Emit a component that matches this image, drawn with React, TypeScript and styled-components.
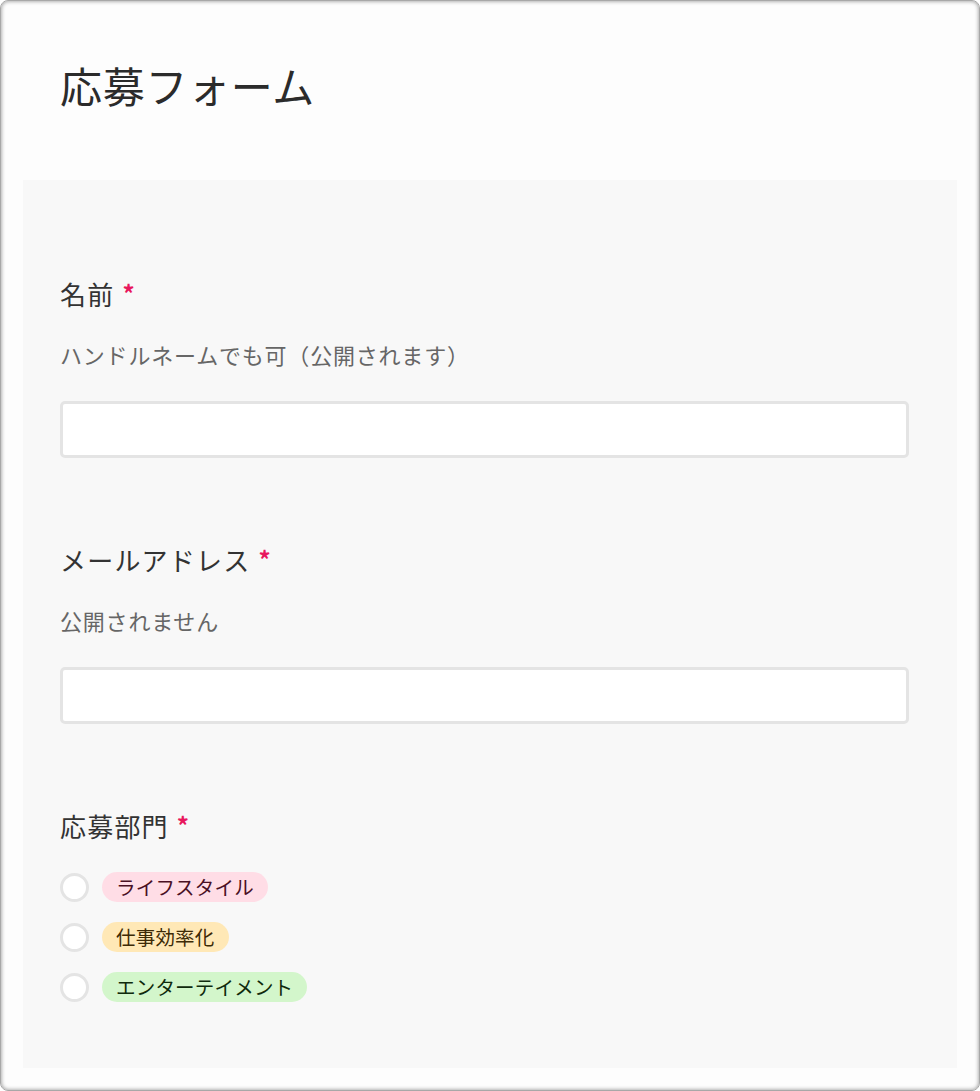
import React from 'react';
import styled, { createGlobalStyle } from 'styled-components';

const GlobalStyle = createGlobalStyle`
  html, body {
    margin: 0;
    padding: 0;
    background: #ffffff;
  }
  body {
    font-family: "Noto Sans CJK JP", "Noto Sans", sans-serif;
    color: #333333;
  }
`;

const Card = styled.div`
  box-sizing: border-box;
  width: 980px;
  height: 1091px;
  background: #fdfdfd;
  border: 1px solid #a8a8a8;
  border-radius: 8px;
  box-shadow: inset 0 0 4px rgba(0, 0, 0, 0.45);
  padding: 0 22px 22px 22px;
  display: flex;
  flex-direction: column;
`;

const Header = styled.header`
  height: 179px;
  box-sizing: border-box;
  padding: 63px 0 0 37px;
`;

const Title = styled.h1`
  margin: 0;
  font-size: 42px;
  line-height: 42px;
  font-weight: 400;
  color: #2b2b2b;
  letter-spacing: 0.7px;
`;

const Panel = styled.form`
  flex: 1;
  background: #f8f8f8;
  padding: 93px 50px 0 37px;
  display: flex;
  flex-direction: column;
  gap: 81px;
`;

const Field = styled.div`
  display: flex;
  flex-direction: column;
`;

const Label = styled.label`
  font-size: 26px;
  line-height: 39px;
  color: #333333;
  letter-spacing: 1.2px;
  margin-bottom: 25px;
`;

const Required = styled.span`
  color: #e8175d;
  font-weight: 700;
  font-size: 24px;
  margin-left: 8px;
  vertical-align: 2px;
`;

const Hint = styled.p`
  margin: 0 0 30px 0;
  font-size: 22px;
  line-height: 33px;
  color: #666666;
  letter-spacing: 0.8px;
`;

const TextInput = styled.input`
  box-sizing: border-box;
  width: 849px;
  height: 57px;
  border: 3px solid #e4e4e4;
  border-radius: 5px;
  background: #ffffff;
  font-size: 20px;
  padding: 0 14px;
  outline: none;
`;

const Options = styled.div`
  display: flex;
  flex-direction: column;
  gap: 20px;
  margin-top: 2px;
`;

const Option = styled.label`
  display: flex;
  align-items: center;
  gap: 13px;
  height: 30px;
`;

const Radio = styled.span`
  box-sizing: border-box;
  width: 29px;
  height: 29px;
  border-radius: 50%;
  border: 3px solid #e4e4e4;
  background: #ffffff;
  flex-shrink: 0;
`;

const Tag = styled.span<{ $bg: string; $fg: string }>`
  display: inline-flex;
  align-items: center;
  height: 30px;
  padding: 0 14px;
  border-radius: 15px;
  background: ${(p) => p.$bg};
  color: ${(p) => p.$fg};
  font-size: 19.5px;
  line-height: 30px;
  letter-spacing: 0.2px;
`;

const categories = [
  { label: 'ライフスタイル', bg: '#ffdde6', fg: '#4a1024' },
  { label: '仕事効率化', bg: '#ffe8b6', fg: '#3d2a05' },
  { label: 'エンターテイメント', bg: '#d3f6cb', fg: '#0f2a0c' },
];

export default function App() {
  return (
    <>
      <GlobalStyle />
      <Card>
        <Header>
          <Title>応募フォーム</Title>
        </Header>
        <Panel onSubmit={(e) => e.preventDefault()}>
          <Field>
            <Label>
              名前<Required>*</Required>
            </Label>
            <Hint>ハンドルネームでも可（公開されます）</Hint>
            <TextInput type="text" />
          </Field>
          <Field>
            <Label>
              メールアドレス<Required>*</Required>
            </Label>
            <Hint>公開されません</Hint>
            <TextInput type="email" />
          </Field>
          <Field>
            <Label>
              応募部門<Required>*</Required>
            </Label>
            <Options>
              {categories.map((c) => (
                <Option key={c.label}>
                  <Radio />
                  <Tag $bg={c.bg} $fg={c.fg}>
                    {c.label}
                  </Tag>
                </Option>
              ))}
            </Options>
          </Field>
        </Panel>
      </Card>
    </>
  );
}
